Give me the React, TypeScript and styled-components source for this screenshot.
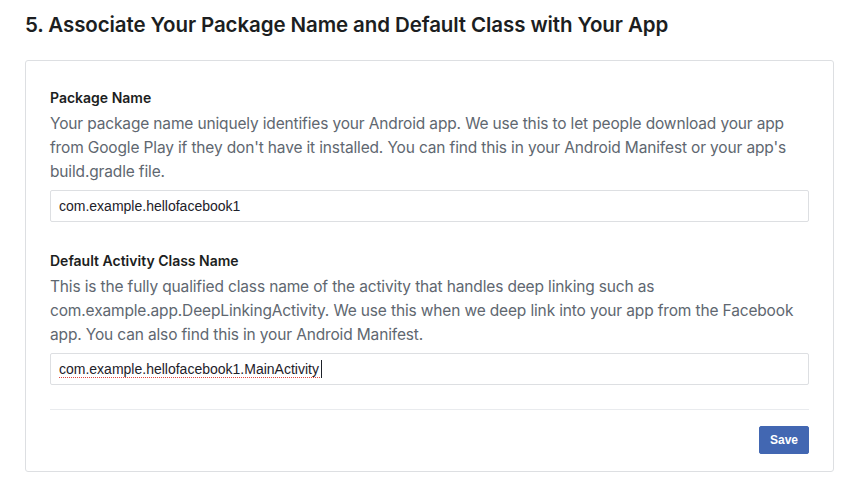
import styled, { createGlobalStyle } from 'styled-components';

const GlobalStyle = createGlobalStyle`
  body {
    margin: 0;
    background: #ffffff;
    font-family: Inter, "Noto Sans", sans-serif;
  }
`;

const Page = styled.div`
  padding: 12px 23px 18px 25px;
`;

const Heading = styled.h2`
  margin: 0 0 22px;
  color: #1c1e21;
  font-size: 20.5px;
  font-weight: 600;
  line-height: 26px;
  letter-spacing: -0.1px;
`;

const Card = styled.div`
  border: 1px solid #dddfe2;
  border-radius: 3px;
  padding: 27px 24px 17px;
`;

const Field = styled.div`
  margin-bottom: 24px;

  & + & {
    padding-top: 5px;
  }
`;

const Label = styled.div`
  color: #1c1e21;
  font-size: 14px;
  font-weight: 600;
  line-height: 20px;
`;

const Help = styled.p`
  margin: 4px 0 6px;
  color: #606770;
  font-size: 15.5px;
  letter-spacing: -0.15px;
  line-height: 24px;
`;

const InputWrap = styled.div`
  position: relative;
`;

const TextInput = styled.input`
  box-sizing: border-box;
  display: block;
  width: 100%;
  height: 32px;
  border: 1px solid #dddfe2;
  border-radius: 2px;
  padding: 0 8px;
  color: #1d2129;
  font-family: "Liberation Sans", Arial, sans-serif;
  font-size: 14px;
  outline: none;
`;

// spell-check squiggle and caret drawn over the focused input
const Squiggle = styled.span<{ $width: number }>`
  position: absolute;
  left: 9px;
  bottom: 7px;
  width: ${({ $width }) => $width}px;
  border-bottom: 1.5px dotted #e0443e;
  pointer-events: none;
`;

const Caret = styled.span<{ $left: number }>`
  position: absolute;
  left: ${({ $left }) => $left}px;
  top: 7px;
  width: 1px;
  height: 18px;
  background: #1d2129;
  pointer-events: none;
`;

const Divider = styled.hr`
  margin: 0;
  border: 0;
  border-top: 1px solid #e9ebee;
`;

const Footer = styled.div`
  display: flex;
  justify-content: flex-end;
  padding-top: 16px;
`;

const SaveButton = styled.button`
  height: 28px;
  padding: 0 10px;
  border: 1px solid #4267b2;
  border-radius: 2px;
  background: #4267b2;
  color: #ffffff;
  font-family: "Liberation Sans", Arial, sans-serif;
  font-size: 12px;
  font-weight: 700;
`;

export default function App() {
  return (
    <>
      <GlobalStyle />
      <Page>
        <Heading>5. Associate Your Package Name and Default Class with Your App</Heading>
        <Card>
          <Field>
            <Label>Package Name</Label>
            <Help>
              Your package name uniquely identifies your Android app. We use this to let people download your app
              <br />
              from Google Play if they don't have it installed. You can find this in your Android Manifest or your app's
              <br />
              build.gradle file.
            </Help>
            <InputWrap>
              <TextInput defaultValue="com.example.hellofacebook1" />
            </InputWrap>
          </Field>
          <Field>
            <Label>Default Activity Class Name</Label>
            <Help>
              This is the fully qualified class name of the activity that handles deep linking such as
              <br />
              com.example.app.DeepLinkingActivity. We use this when we deep link into your app from the Facebook
              <br />
              app. You can also find this in your Android Manifest.
            </Help>
            <InputWrap>
              <TextInput defaultValue="com.example.hellofacebook1.MainActivity" />
              <Squiggle $width={261} />
              <Caret $left={271} />
            </InputWrap>
          </Field>
          <Divider />
          <Footer>
            <SaveButton>Save</SaveButton>
          </Footer>
        </Card>
      </Page>
    </>
  );
}
